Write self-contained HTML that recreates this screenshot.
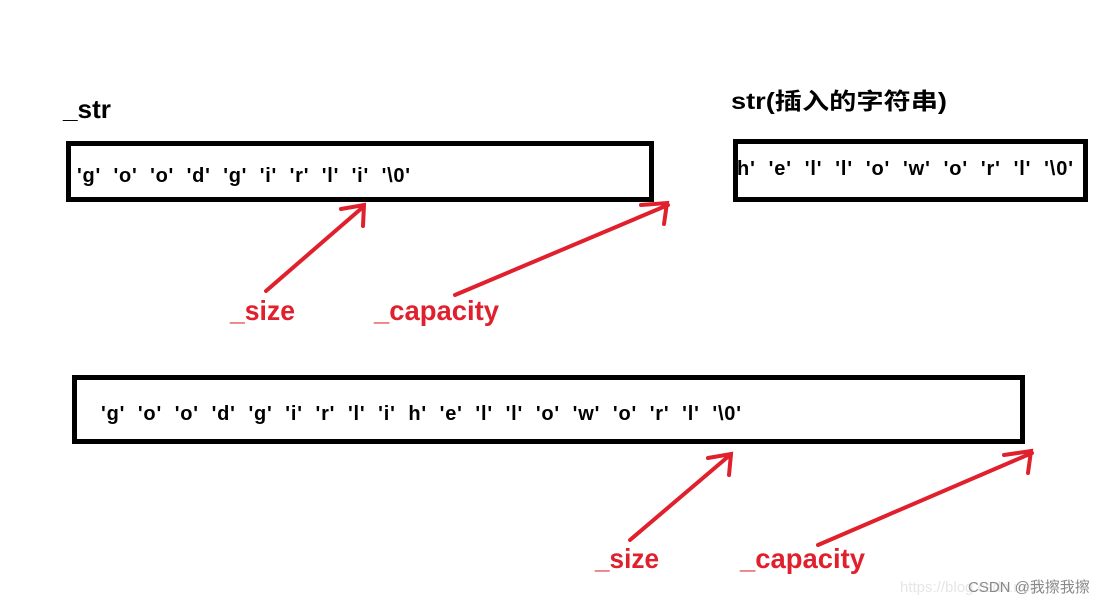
<!DOCTYPE html>
<html><head><meta charset="utf-8"><style>
html,body{margin:0;padding:0;background:#fff;}
svg{display:block;}
text{font-family:"Liberation Sans","Noto Sans CJK SC",sans-serif;font-weight:bold;}
</style></head><body>
<svg width="1120" height="605" viewBox="0 0 1120 605" xmlns="http://www.w3.org/2000/svg">
<rect width="1120" height="605" fill="#fff"/>
<text x="63" y="118" font-size="26" fill="#000" textLength="48" lengthAdjust="spacingAndGlyphs">_str</text>
<text x="731" y="109" font-size="23" fill="#000" textLength="216" lengthAdjust="spacingAndGlyphs">str(插入的字符串)</text>
<rect x="68.5" y="143.5" width="583" height="56" fill="none" stroke="#000" stroke-width="5"/>
<rect x="735.5" y="141.5" width="350" height="58" fill="none" stroke="#000" stroke-width="5"/>
<rect x="74.5" y="377.5" width="948" height="64" fill="none" stroke="#000" stroke-width="5"/>
<text x="77" y="182" font-size="20" fill="#000" xml:space="preserve" textLength="333" lengthAdjust="spacing">'g'  'o'  'o'  'd'  'g'  'i'  'r'  'l'  'i'  '\0'</text>
<text x="737" y="175" font-size="20" fill="#000" xml:space="preserve" textLength="336" lengthAdjust="spacing">h'  'e'  'l'  'l'  'o'  'w'  'o'  'r'  'l'  '\0'</text>
<text x="101" y="420" font-size="20" fill="#000" xml:space="preserve" textLength="640" lengthAdjust="spacing">'g'  'o'  'o'  'd'  'g'  'i'  'r'  'l'  'i'  h'  'e'  'l'  'l'  'o'  'w'  'o'  'r'  'l'  '\0'</text>
<g stroke="#e0202c" stroke-width="4" fill="none" stroke-linecap="round">
<path d="M266 291 L363 207 M341 209 L364 205 L363 226"/>
<path d="M455 295 L668 205 M641 205 L667 203 L664 224"/>
<path d="M630 540 L730 455 M708 458 L731 454 L729 475"/>
<path d="M818 545 L1032 453 M1004 455 L1031 451 L1028 473"/>
</g>
<text x="230" y="320" font-size="28" fill="#e0202c" textLength="65" lengthAdjust="spacingAndGlyphs">_size</text>
<text x="374" y="320" font-size="28" fill="#e0202c" textLength="125" lengthAdjust="spacingAndGlyphs">_capacity</text>
<text x="595" y="568" font-size="28" fill="#e0202c" textLength="64" lengthAdjust="spacingAndGlyphs">_size</text>
<text x="740" y="568" font-size="28" fill="#e0202c" textLength="125" lengthAdjust="spacingAndGlyphs">_capacity</text>
<text x="900" y="592" font-size="15" fill="#e6e6e6" style="font-weight:normal">https://blog.csdn.net/</text>
<text x="968" y="592" font-size="15" fill="#888" style="font-weight:normal">CSDN @我擦我擦</text>
</svg>
</body></html>
